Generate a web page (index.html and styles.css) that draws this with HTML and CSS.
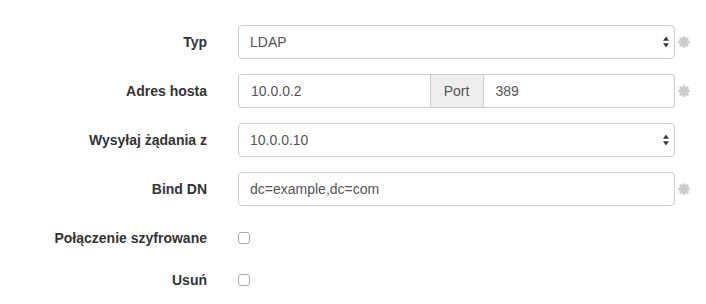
FILE: index.html
```html
<!DOCTYPE html>
<html lang="pl">
<head>
<meta charset="utf-8">
<link rel="stylesheet" href="styles.css">
</head>
<body>
<form class="form">
  <div class="row">
    <label class="label">Typ</label>
    <div class="field control select">
      <span class="value">LDAP</span>
      <svg class="arrows" width="6" height="12" viewBox="0 0 6 12"><path d="M0 4.8 L3 0.5 L6 4.8 Z M0 7.2 L3 11.5 L6 7.2 Z" fill="#3a3a3a"/></svg>
    </div>
    <svg class="req" width="12" height="12" viewBox="0 0 12 12"><g stroke="#cccccc" stroke-width="3" stroke-linecap="round"><line x1="6" y1="1.5" x2="6" y2="10.5"/><line x1="1.5" y1="6" x2="10.5" y2="6"/><line x1="2.8" y1="2.8" x2="9.2" y2="9.2"/><line x1="9.2" y1="2.8" x2="2.8" y2="9.2"/></g></svg>
  </div>
  <div class="row">
    <label class="label">Adres hosta</label>
    <div class="field group">
      <div class="control part first"><span class="value">10.0.0.2</span></div>
      <div class="addon">Port</div>
      <div class="control part last"><span class="value">389</span></div>
    </div>
    <svg class="req" width="12" height="12" viewBox="0 0 12 12"><g stroke="#cccccc" stroke-width="3" stroke-linecap="round"><line x1="6" y1="1.5" x2="6" y2="10.5"/><line x1="1.5" y1="6" x2="10.5" y2="6"/><line x1="2.8" y1="2.8" x2="9.2" y2="9.2"/><line x1="9.2" y1="2.8" x2="2.8" y2="9.2"/></g></svg>
  </div>
  <div class="row">
    <label class="label">Wysyłaj żądania z</label>
    <div class="field control select">
      <span class="value">10.0.0.10</span>
      <svg class="arrows" width="6" height="12" viewBox="0 0 6 12"><path d="M0 4.8 L3 0.5 L6 4.8 Z M0 7.2 L3 11.5 L6 7.2 Z" fill="#3a3a3a"/></svg>
    </div>
  </div>
  <div class="row">
    <label class="label">Bind DN</label>
    <div class="field control"><span class="value">dc=example,dc=com</span></div>
    <svg class="req" width="12" height="12" viewBox="0 0 12 12"><g stroke="#cccccc" stroke-width="3" stroke-linecap="round"><line x1="6" y1="1.5" x2="6" y2="10.5"/><line x1="1.5" y1="6" x2="10.5" y2="6"/><line x1="2.8" y1="2.8" x2="9.2" y2="9.2"/><line x1="9.2" y1="2.8" x2="2.8" y2="9.2"/></g></svg>
  </div>
  <div class="row check-row">
    <label class="label">Połączenie szyfrowane</label>
    <div class="field check-cell"><span class="checkbox"></span></div>
  </div>
  <div class="row check-row">
    <label class="label">Usuń</label>
    <div class="field check-cell"><span class="checkbox"></span></div>
  </div>
</form>
</body>
</html>
```

FILE: styles.css
```css
html, body {
  margin: 0;
  padding: 0;
  background: #fff;
}
body {
  font-family: "Liberation Sans", Arial, Helvetica, sans-serif;
  font-size: 14px;
  color: #333;
}
.form {
  padding-top: 25px;
}
.row {
  display: grid;
  grid-template-columns: 207px 31px 437px 16px;
  align-items: center;
  height: 34px;
  margin-bottom: 15px;
}
.label {
  grid-column: 1;
  font-weight: bold;
  text-align: right;
  white-space: nowrap;
}
.field {
  grid-column: 3;
}
.req {
  grid-column: 4;
  display: block;
  margin-left: 3px;
}
.control {
  box-sizing: border-box;
  height: 34px;
  border: 1px solid #ccc;
  border-radius: 4px;
  background: #fff;
  color: #555;
  display: flex;
  align-items: center;
  padding: 0 12px 0 11px;
}
.select {
  justify-content: space-between;
  padding-right: 5px;
}
.arrows {
  display: block;
}
.group {
  display: flex;
  height: 34px;
}
.part {
  flex: 1;
  padding-left: 12px;
}
.part.first {
  border-top-right-radius: 0;
  border-bottom-right-radius: 0;
  border-right: none;
}
.part.last {
  border-top-left-radius: 0;
  border-bottom-left-radius: 0;
  border-left: none;
}
.addon {
  box-sizing: border-box;
  height: 34px;
  width: 54px;
  border: 1px solid #ccc;
  background: #eee;
  color: #555;
  display: flex;
  align-items: center;
  justify-content: center;
}
.check-row {
  margin-bottom: 8px;
}
.check-cell {
  display: flex;
  align-items: center;
}
.checkbox {
  display: block;
  box-sizing: border-box;
  width: 12px;
  height: 12px;
  border: 1px solid #a9a9a9;
  border-radius: 3px;
  background: #fff;
}
```
